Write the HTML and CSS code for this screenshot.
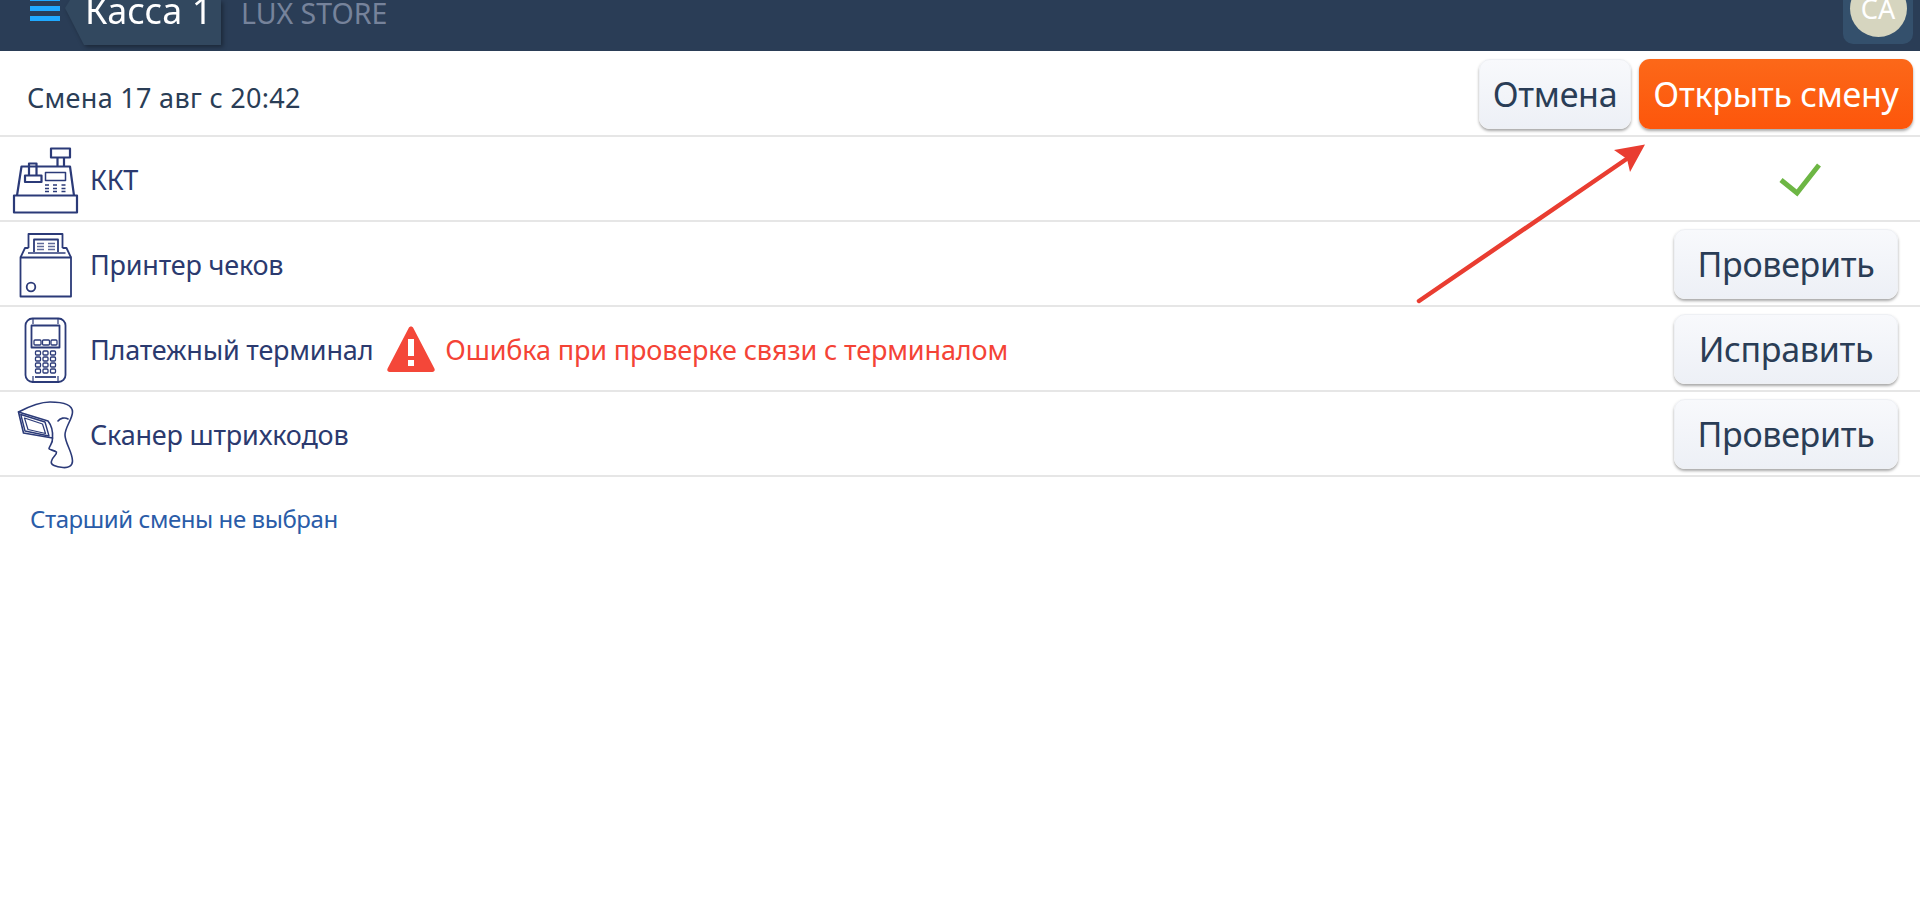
FILE: index.html
```html
<!DOCTYPE html>
<html lang="ru">
<head>
<meta charset="utf-8">
<title>Касса 1</title>
<link rel="stylesheet" href="styles.css">
</head>
<body>
<header class="topbar">
  <div class="burger"><span></span><span></span><span></span></div>
  <div class="tab"><div class="tab-shape"><span class="tab-title">Касса 1</span></div></div>
  <div class="store">LUX STORE</div>
  <div class="user"><div class="avatar">СА</div></div>
</header>
<section class="shift">
  <div class="shift-title">Смена 17 авг с 20:42</div>
  <div class="shift-actions">
    <button class="btn btn-cancel">Отмена</button>
    <button class="btn btn-open">Открыть смену</button>
  </div>
</section>
<div class="row">
  <svg class="dev" viewBox="0 0 91 84" width="91" height="84"><g fill="none" stroke="#2b3a78" stroke-width="2.200" stroke-linejoin="round">
    <rect x="14" y="58.500" width="63" height="17"/>
    <path d="M17 58.500 21.500 29.500H70L74 58.500"/>
    <rect x="51" y="11.500" width="19" height="9"/>
    <path d="M57.500 20.500V29.500M64 20.500V29.500"/>
    <rect x="45.500" y="35.500" width="20" height="8" stroke-width="1.500"/>
    <path d="M29 38V26.500H36.500V38M25 38.500H41.500V45H25Z"/>
    <path d="M45 48h4M53 48h4M61.500 48h4M45 51.500h4M53 51.500h4M61.500 51.500h4M45 54.500h4M53 54.500h4M61.500 54.500h4" stroke-width="1.500"/>
  </g></svg>
  <span class="dev-name">ККТ</span>
  <svg class="check" viewBox="0 0 44 40" width="44" height="40"><path d="M3 20 19 33 41 5" fill="none" stroke="#6db644" stroke-width="5"/></svg>
</div>
<div class="row">
  <svg class="dev" viewBox="0 0 91 84" width="91" height="84"><g fill="none" stroke="#2b3a78" stroke-width="1.800" stroke-linejoin="round">
    <path d="M20.500 35.500H71V74.500H20.500Z"/>
    <path d="M20.500 35.500 25 26H28.500M62.500 26H66.500L71 35.500"/>
    <path d="M28.500 26V12H62.500V26"/>
    <path d="M34 30V17.500H58V30"/>
    <path d="M28 31H65.500" stroke-width="1.500"/>
    <circle cx="31" cy="65" r="4.300"/>
    <path d="M37 21.500h7M48 21.500h7M37 24.500h7M48 24.500h7M37 27.500h7M48 27.500h7" stroke-width="1.300" stroke-opacity=".75"/>
  </g></svg>
  <span class="dev-name">Принтер чеков</span>
  <button class="btn btn-check">Проверить</button>
</div>
<div class="row">
  <svg class="dev" viewBox="0 0 91 84" width="91" height="84"><g fill="none" stroke="#2b3a78" stroke-width="1.800" stroke-linejoin="round">
    <rect x="25.500" y="11.500" width="40" height="63.500" rx="7"/>
    <path d="M33 11.500V17M58 11.500V17M33 75V69M58 75V69" stroke-width="1.200"/>
    <rect x="31.500" y="18.500" width="28" height="22"/>
    <g stroke-width="1.300">
    <rect x="34" y="33" width="7" height="5" rx="1"/><rect x="42.500" y="33" width="7" height="5" rx="1"/><rect x="51" y="33" width="6" height="5" rx="1"/>
    <rect x="35.500" y="44" width="5" height="4" rx="1"/><rect x="43" y="44" width="5" height="4" rx="1"/><rect x="50.500" y="44" width="5" height="4" rx="1"/>
    <rect x="35.500" y="50" width="5" height="4" rx="1"/><rect x="43" y="50" width="5" height="4" rx="1"/><rect x="50.500" y="50" width="5" height="4" rx="1"/>
    <rect x="35.500" y="56" width="5" height="4" rx="1"/><rect x="43" y="56" width="5" height="4" rx="1"/><rect x="50.500" y="56" width="5" height="4" rx="1"/>
    <rect x="35.500" y="62" width="5" height="4" rx="1"/><rect x="43" y="62" width="5" height="4" rx="1"/><rect x="50.500" y="62" width="5" height="4" rx="1"/>
    </g>
    <path d="M35 70H56"/>
  </g></svg>
  <span class="dev-name">Платежный терминал</span>
  <svg class="warn" viewBox="0 0 48 46" width="48" height="46"><path d="M24 .5C25 .5 25.800 1 26.300 2L47.400 42.500C48.300 44.300 47.200 46 45.300 46H2.700C.8 46-.3 44.300.6 42.500L21.700 2C22.200 1 23 .5 24 .5Z" fill="#f44739"/><rect x="21" y="13" width="6" height="17" fill="#fff"/><rect x="21" y="34" width="6" height="6" fill="#fff"/></svg>
  <span class="err">Ошибка при проверке связи с терминалом</span>
  <button class="btn btn-check">Исправить</button>
</div>
<div class="row">
  <svg class="dev" viewBox="0 0 91 84" width="91" height="84"><g fill="none" stroke="#2b3a78" stroke-width="1.600" stroke-linejoin="round" stroke-linecap="round">
    <path d="M18.500 20C28 15 40 10 50 10C60 10 72.500 12 72.500 20C72.500 27 65 35 65 43C65 51 72.500 60 72.500 69C72.500 74 68 76 63 75.500C56 75 50 73 51.500 69C53 64 57 63 56.500 60C54 58 49 58 49 56.500C50 53 53 51 52.500 46"/>
    <path d="M18.500 20 23.500 41 52.500 46C53 40 52 34 48 29L18.500 20"/>
    <path d="M20.800 22.500 45 30 49 44 25 39Z" stroke-width="1.400"/>
    <path d="M24.500 26 42.500 32 45.500 41.500 28 37.500Z" stroke-width="1.200"/>
    <path d="M58 29C60 26 65 25 68 27"/>
  </g></svg>
  <span class="dev-name">Сканер штрихкодов</span>
  <button class="btn btn-check">Проверить</button>
</div>
<p class="senior">Старший смены не выбран</p>
<svg class="arrow" viewBox="0 0 1920 924" width="1920" height="924"><path d="M1419 301 1628 158" stroke="#e93d31" stroke-width="4.500" stroke-linecap="round" fill="none"/><path d="M1645 144.500 1614 150 1627 159 1630 172Z" fill="#e93d31"/></svg>
</body>
</html>
```

FILE: styles.css
```css
* { box-sizing: border-box; }
html, body { margin: 0; padding: 0; height: 100%; overflow: hidden; background: #fff; }
body { font-family: "Noto Sans", "Open Sans", sans-serif; color: #2a3d56; position: relative; }

.topbar { height: 51px; background: #2a3d56; display: flex; align-items: flex-start; position: relative; overflow: hidden; }
.burger { width: 30px; height: 21px; margin-left: 30px; display: flex; flex-direction: column; justify-content: flex-end; gap: 5px; flex: none; }
.burger span { display: block; height: 5px; background: #1fa9ff; flex: none; }
.tab { width: 156px; height: 45px; margin-left: 5px; flex: none; filter: drop-shadow(2px 2px 2px rgba(0,0,0,.35)); }
.tab-shape { height: 45px; background: #32485f; clip-path: polygon(5px 0, 0 8px, 19px 45px, 100% 45px, 100% 0); }
.tab-title { display: block; margin-left: 20px; font-size: 36px; line-height: 30px; color: #fff; white-space: nowrap; transform: translateY(-4px); }
.store { margin: 0 0 0 20px; font-size: 28.500px; line-height: 30px; color: #76839b; white-space: nowrap; transform: translateY(-2px); }
.user { margin-left: auto; margin-right: 7px; width: 70px; height: 44px; background: #34506c; border-radius: 0 0 10px 10px; display: flex; justify-content: center; align-items: flex-end; padding-bottom: 7px; flex: none; }
.avatar { width: 57px; height: 57px; flex: none; border-radius: 50%; background: #d6d5bf; color: #fff; font-size: 27px; line-height: 57px; text-align: center; }

.shift { height: 86px; display: flex; align-items: center; justify-content: space-between; padding: 0 7px 0 27px; border-bottom: 2px solid #e6e6e6; }
.shift-title { font-size: 27px; letter-spacing: .3px; color: #2a3d56; margin-top: 9px; }
.shift-actions { display: flex; gap: 8px; margin-top: 2px; }

.btn { height: 70px; padding: 0; border: 1px solid #eef0f4; border-radius: 11px; font-family: inherit; font-size: 34px; letter-spacing: -.3px; color: #2a3d56; background: linear-gradient(#f8f9fc, #edf0f6); box-shadow: 0 2px 3px rgba(0,0,0,.35); white-space: nowrap; }
.btn-cancel { width: 152px; }
.btn-open { width: 274px; background: linear-gradient(#fc6819, #fd560b); border: 0; color: #fff; }
.btn-check { width: 224px; margin-left: auto; margin-right: 22px; }

.row { height: 85px; display: flex; align-items: center; border-bottom: 2px solid #e6e6e6; }
.dev { flex: none; margin-right: -1px; }
.dev-name { font-size: 27px; letter-spacing: -.2px; color: #2b3a6f; white-space: nowrap; margin-top: 1px; }
.check { margin-left: auto; margin-right: 98px; margin-top: 2px; flex: none; }
.warn { margin: 0 10px 0 14px; flex: none; }
.err { font-size: 27px; letter-spacing: -.13px; color: #f44336; white-space: nowrap; margin-top: 1px; }
.senior { margin: 0; padding: 26px 0 0 30px; font-size: 24px; line-height: 32px; letter-spacing: -.43px; color: #2a5ca8; }
.arrow { position: absolute; left: 0; top: 0; pointer-events: none; }
```
